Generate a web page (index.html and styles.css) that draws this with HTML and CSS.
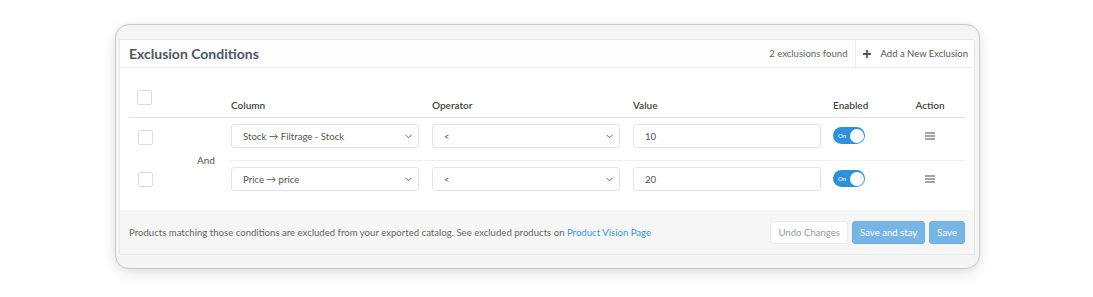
FILE: index.html
```html
<!DOCTYPE html>
<html>
<head>
<meta charset="utf-8">
<link rel="stylesheet" href="styles.css">
</head>
<body>
<div class="frame">
  <div class="panel">
    <div class="panel-head">
      <div class="title">Exclusion Conditions</div>
      <div class="count">2 exclusions found</div>
      <div class="add-btn">
        <svg width="8" height="8" viewBox="0 0 8 8"><path d="M4 0v8M0 4h8" stroke="#555" stroke-width="1.8"/></svg>
        <span>Add a New Exclusion</span>
      </div>
    </div>
    <div class="panel-body">
      <div class="grid">
        <div class="th th-check"><span class="checkbox"></span></div>
        <div class="th"></div>
        <div class="th">Column</div>
        <div class="th">Operator</div>
        <div class="th">Value</div>
        <div class="th">Enabled</div>
        <div class="th th-action">Action</div>

        <div class="td td-check"><span class="checkbox"></span></div>
        <div class="td td-and">And</div>
        <div class="td"><div class="select"><span>Stock → Filtrage - Stock</span><svg width="7" height="5" viewBox="0 0 7 5"><path d="M0.5 0.8L3.5 3.8L6.5 0.8" fill="none" stroke="#666" stroke-width="1"/></svg></div></div>
        <div class="td"><div class="select"><span>&lt;</span><svg width="7" height="5" viewBox="0 0 7 5"><path d="M0.5 0.8L3.5 3.8L6.5 0.8" fill="none" stroke="#666" stroke-width="1"/></svg></div></div>
        <div class="td"><div class="input">10</div></div>
        <div class="td"><div class="toggle"><span class="on">On</span><span class="knob"></span></div></div>
        <div class="td td-action"><svg width="10" height="8" viewBox="0 0 10 8"><path d="M0 1h10M0 4h10M0 7h10" stroke="#888" stroke-width="1.6"/></svg></div>

        <div class="td td-check"><span class="checkbox"></span></div>
        <div class="td sep"><div class="select"><span>Price → price</span><svg width="7" height="5" viewBox="0 0 7 5"><path d="M0.5 0.8L3.5 3.8L6.5 0.8" fill="none" stroke="#666" stroke-width="1"/></svg></div></div>
        <div class="td sep"><div class="select"><span>&lt;</span><svg width="7" height="5" viewBox="0 0 7 5"><path d="M0.5 0.8L3.5 3.8L6.5 0.8" fill="none" stroke="#666" stroke-width="1"/></svg></div></div>
        <div class="td sep"><div class="input">20</div></div>
        <div class="td sep"><div class="toggle"><span class="on">On</span><span class="knob"></span></div></div>
        <div class="td sep td-action"><svg width="10" height="8" viewBox="0 0 10 8"><path d="M0 1h10M0 4h10M0 7h10" stroke="#888" stroke-width="1.6"/></svg></div>
      </div>
    </div>
    <div class="panel-foot">
      <div class="note">Products matching those conditions are excluded from your exported catalog. See excluded products on <a class="link">Product Vision Page</a></div>
      <div class="actions">
        <button class="btn btn-light">Undo Changes</button>
        <button class="btn btn-primary">Save and stay</button>
        <button class="btn btn-primary">Save</button>
      </div>
    </div>
  </div>
</div>
</body>
</html>
```
FILE: styles.css
```css
* { box-sizing: border-box; }
html, body { margin: 0; padding: 0; background: #fff; }
body {
  font-family: Lato, "Open Sans", "Liberation Sans", sans-serif;
  color: #555;
  width: 1093px;
  height: 297px;
  overflow: hidden;
}
.frame {
  margin: 24px 0 0 115px;
  width: 865px;
  height: 245px;
  border: 1px solid #c9c9c9;
  border-radius: 14px;
  background: #f5f5f5;
  box-shadow: 0 5px 14px rgba(0,0,0,0.10), 0 0 6px rgba(0,0,0,0.05);
  padding: 14px 4px 0 3px;
}
.panel {
  background: #fff;
  border: 1px solid #e6e6e6;
  display: flex;
  flex-direction: column;
}
.panel-head {
  height: 28px;
  display: flex;
  align-items: stretch;
  border-bottom: 1px solid #ececec;
  background: #fdfdfd;
}
.title {
  flex: 1;
  display: flex;
  align-items: center;
  padding-left: 9px;
  font-size: 14px;
  font-weight: 700;
  color: #4d5863;
}
.count {
  display: flex;
  align-items: center;
  font-size: 9.6px;
  color: #666;
  padding-right: 7px;
}
.add-btn {
  display: flex;
  align-items: center;
  gap: 10px;
  padding: 0 6px 0 7px;
  border-left: 1px solid #ececec;
  background: #fff;
  font-size: 9.5px;
  color: #555;
}
.panel-body {
  padding: 12px 10px 9px 9px;
}
.grid {
  display: grid;
  grid-template-columns: 46px 56px 201px 201px 200px 64px 68px;
  grid-template-rows: 38px 42px 41px;
}
.th {
  display: flex;
  align-items: flex-end;
  padding-bottom: 6px;
  font-size: 10px;
  font-weight: 600;
  color: #444;
  border-bottom: 1px solid #e4e4e4;
}
.th-check { align-items: flex-start; padding-top: 10px; padding-left: 8px; }
.th-action { justify-content: center; padding-right: 2px; }
.checkbox {
  display: block;
  width: 15px;
  height: 15px;
  border: 1px solid #dcdcdc;
  border-radius: 2px;
  background: #fff;
}
.td {
  display: flex;
  align-items: flex-start;
  padding-top: 6px;
  padding-right: 12px;
}
.td.sep { border-top: 1px solid #efefef; }
.td-check { padding-left: 9px; padding-top: 12px; }
.td-and {
  grid-row: 2 / span 2;
  grid-column: 2;
  align-items: center;
  padding: 0 0 0 22px;
  font-size: 10px;
  color: #555;
}
.td-action { justify-content: center; padding: 14px 2px 0 0; }
.select, .input {
  width: 188px;
  height: 24px;
  border: 1px solid #e4e4e4;
  border-radius: 3px;
  display: flex;
  align-items: center;
  justify-content: space-between;
  padding: 0 6px 0 11px;
  font-size: 9.6px;
  color: #555;
  background: #fff;
}
.toggle {
  margin-top: 3px;
  width: 32px;
  height: 17px;
  border-radius: 9px;
  background: #2e8fdb;
  display: flex;
  align-items: center;
  justify-content: space-between;
  padding: 0 1.5px 0 5px;
}
.toggle .on {
  font-size: 6px;
  color: #fff;
}
.toggle .knob {
  width: 14px;
  height: 14px;
  border-radius: 50%;
  background: #fff;
}
.panel-foot {
  height: 44px;
  background: #f6f6f6;
  display: flex;
  align-items: center;
  justify-content: space-between;
  padding: 0 9px 0 9px;
}
.note {
  font-size: 9.6px;
  color: #666;
}
.link { color: #3a98d8; text-decoration: none; }
.actions { display: flex; gap: 4px; }
.btn {
  font-family: inherit;
  height: 23px;
  border-radius: 3px;
  font-size: 9.6px;
  padding: 0 7px;
  cursor: pointer;
}
.btn-light {
  background: #fff;
  border: 1px solid #ececec;
  color: #9a9a9a;
}
.btn-primary {
  background: #77b6e4;
  border: 1px solid #6eb0e0;
  color: #fff;
}
```
